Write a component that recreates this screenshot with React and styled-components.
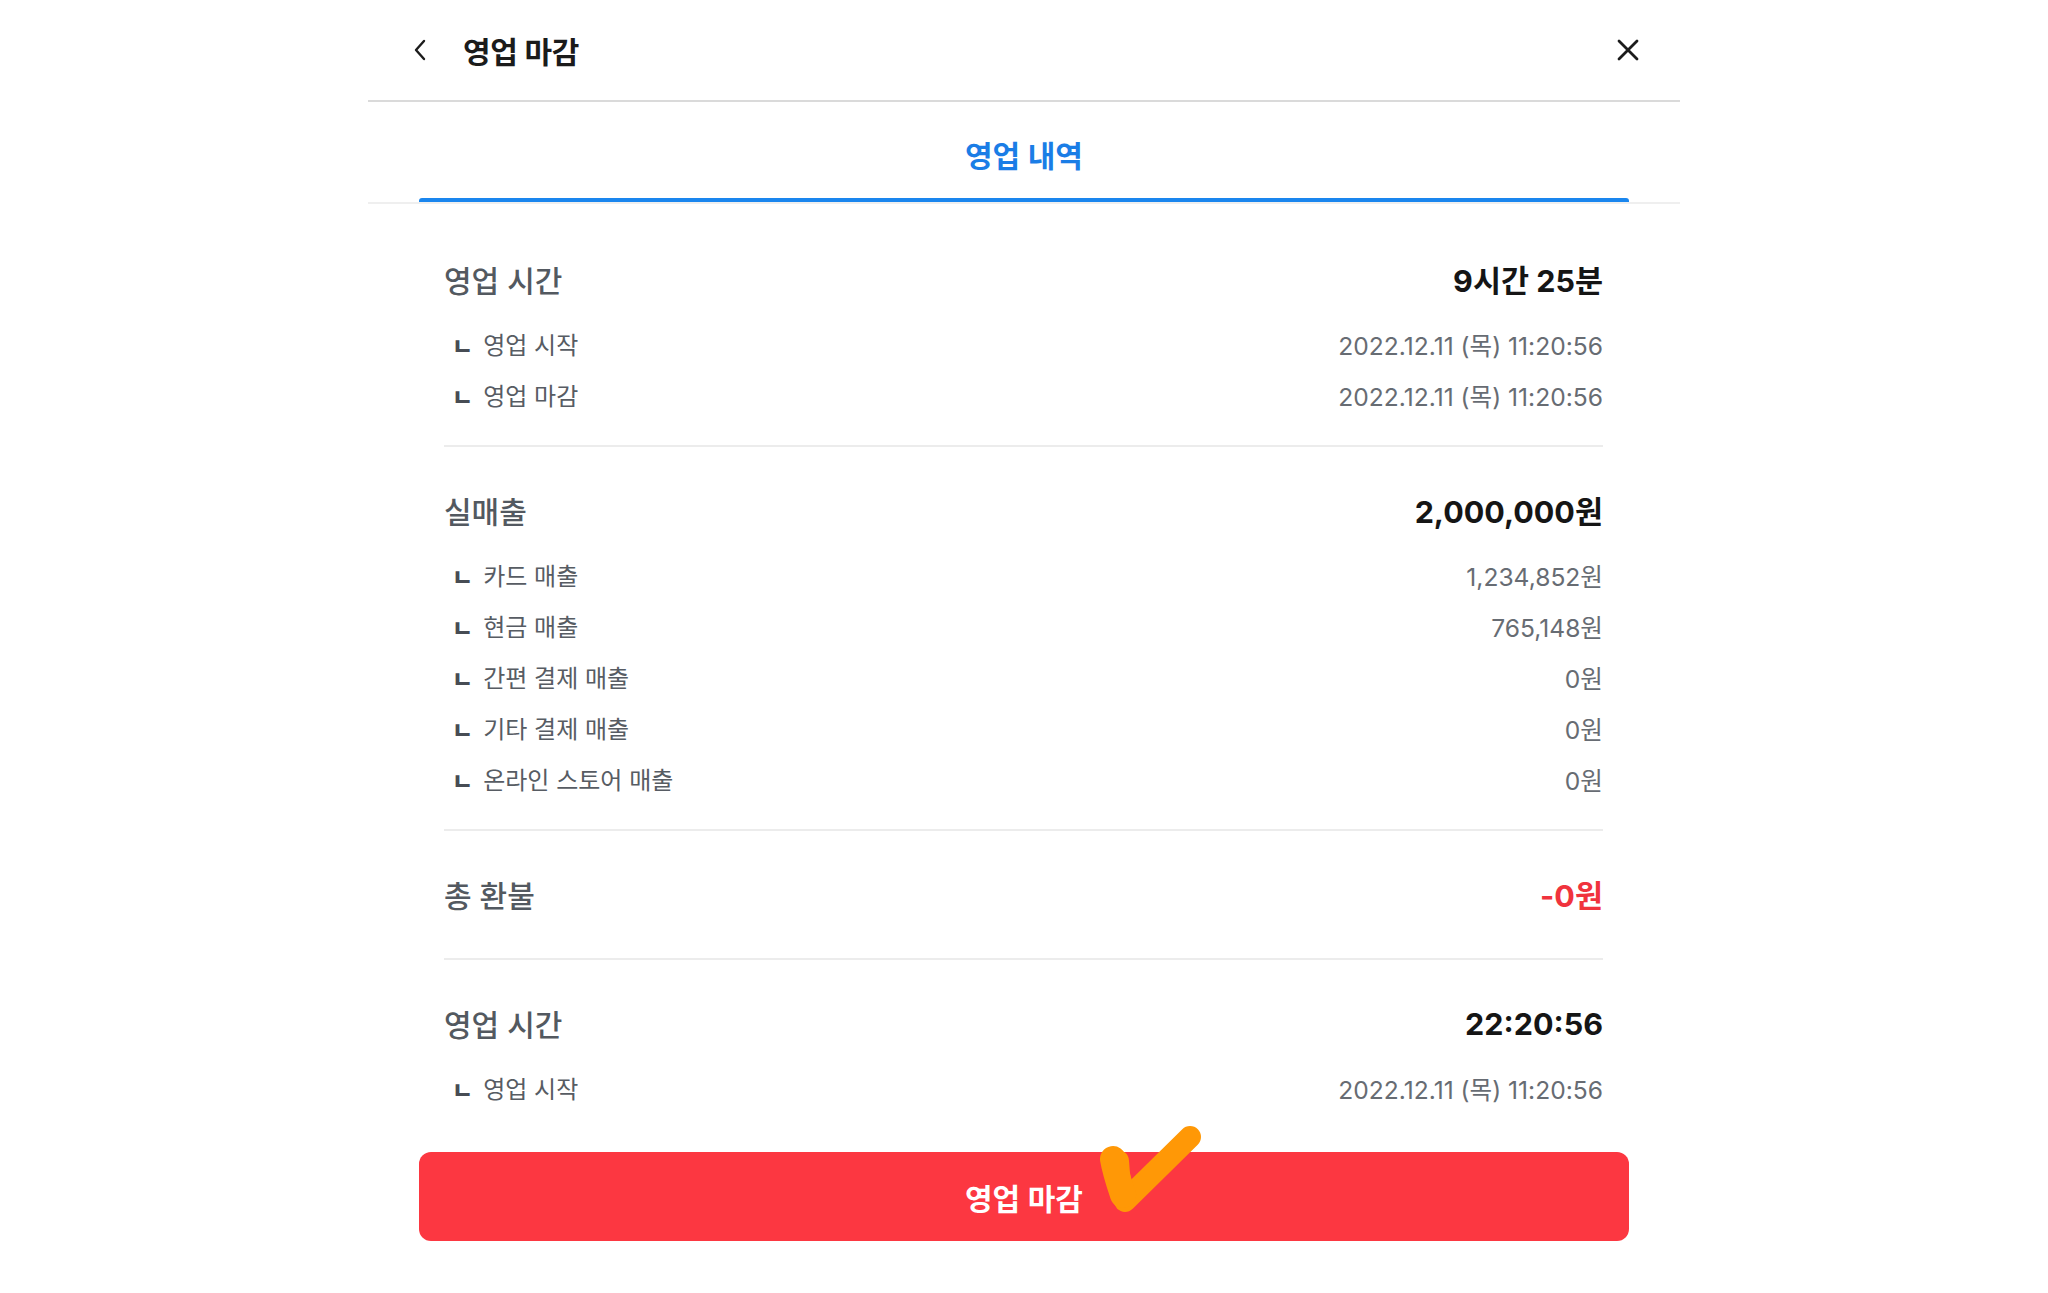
import React from 'react'
import styled, { createGlobalStyle } from 'styled-components'

const GlobalStyle = createGlobalStyle`
  html, body {
    margin: 0;
    padding: 0;
    background: #fff;
    font-family: "Inter", "Noto Sans CJK KR", sans-serif;
  }
`

const Page = styled.div`
  display: flex;
  justify-content: center;
  min-height: 1293px;
`
const Panel = styled.div`
  width: 1312px;
  display: flex;
  flex-direction: column;
`
const Header = styled.header`
  height: 100px;
  display: flex;
  align-items: center;
  padding: 0 40px 0 45px;
  border-bottom: 2px solid #dadada;
`
const IconButton = styled.button`
  border: none;
  background: none;
  padding: 0;
  display: flex;
  align-items: center;
  justify-content: center;
  color: #1c1c1c;
  cursor: pointer;
`
const Title = styled.h1`
  margin: 0 0 0 36px;
  font-size: 30px;
  font-weight: 700;
  color: #1b1b1b;
  flex: 1;
  letter-spacing: -0.3px;
`
const TabBar = styled.nav`
  padding: 0 51px;
  border-bottom: 2px solid #efefef;
`
const Tab = styled.div`
  height: 100px;
  display: flex;
  flex-direction: column;
  align-items: stretch;
  justify-content: flex-end;
`
const TabLabel = styled.span`
  flex: 1;
  display: flex;
  align-items: center;
  justify-content: center;
  padding-top: 8px;
  font-size: 30px;
  font-weight: 600;
  color: #1a7de6;
`
const Indicator = styled.div`
  height: 4px;
  border-radius: 3px 3px 0 0;
  background: #1a86ee;
`
const Content = styled.main`
  padding: 12px 77px 0 76px;
`
const Section = styled.section`
  padding: 38px 0 25px;
  border-bottom: ${p => (p.$last ? 'none' : '2px solid #ececec')};
`
const TitleRow = styled.div`
  height: 50px;
  display: flex;
  align-items: center;
  justify-content: space-between;
  margin-bottom: 14px;
`
const SectionLabel = styled.span`
  font-size: 30px;
  font-weight: 500;
  color: #535960;
`
const SectionValue = styled.span`
  font-size: 30.5px;
  font-weight: 700;
  color: ${p => (p.$red ? '#f0333d' : '#151515')};
`
const SubRow = styled.div`
  height: 51px;
  display: flex;
  align-items: center;
  justify-content: space-between;
`
const SubLabel = styled.span`
  display: flex;
  align-items: center;
  gap: 10px;
  padding-left: 8px;
  font-size: 24px;
  color: #575c63;
`
const Mark = styled.span`
  font-size: 23px;
  font-weight: 900;
  color: #474c54;
  padding-top: 3px;
`
const SubValue = styled.span`
  font-size: 24.6px;
  color: #676c73;
`
const Footer = styled.div`
  padding: 14px 51px 48px;
`
const CloseButton = styled.button`
  position: relative;
  width: 100%;
  height: 89px;
  border: none;
  border-radius: 12px;
  background: #fc3741;
  color: #fff;
  font-family: inherit;
  font-size: 30px;
  font-weight: 600;
  cursor: pointer;
`
const Check = styled.svg`
  position: absolute;
  left: 678px;
  top: -29px;
  width: 110px;
  height: 100px;
  pointer-events: none;
`

const sections = [
  {
    label: '영업 시간',
    value: '9시간 25분',
    rows: [
      ['영업 시작', '2022.12.11 (목) 11:20:56'],
      ['영업 마감', '2022.12.11 (목) 11:20:56'],
    ],
  },
  {
    label: '실매출',
    value: '2,000,000원',
    rows: [
      ['카드 매출', '1,234,852원'],
      ['현금 매출', '765,148원'],
      ['간편 결제 매출', '0원'],
      ['기타 결제 매출', '0원'],
      ['온라인 스토어 매출', '0원'],
    ],
  },
  { label: '총 환불', value: '-0원', red: true, rows: [] },
  {
    label: '영업 시간',
    value: '22:20:56',
    rows: [['영업 시작', '2022.12.11 (목) 11:20:56']],
  },
]

export default function App() {
  return (
    <>
      <GlobalStyle />
      <Page>
        <Panel>
          <Header>
            <IconButton aria-label="뒤로">
              <svg width="14" height="22" viewBox="0 0 14 22" fill="none">
                <path d="M11 2 L3 11 L11 20" stroke="#1c1c1c" strokeWidth="2.4" strokeLinecap="round" strokeLinejoin="round" />
              </svg>
            </IconButton>
            <Title>영업 마감</Title>
            <IconButton aria-label="닫기">
              <svg width="24" height="24" viewBox="0 0 24 24" fill="none">
                <path d="M3 3 L21 21 M21 3 L3 21" stroke="#1c1c1c" strokeWidth="2.8" strokeLinecap="round" />
              </svg>
            </IconButton>
          </Header>
          <TabBar>
            <Tab>
              <TabLabel>영업 내역</TabLabel>
              <Indicator />
            </Tab>
          </TabBar>
          <Content>
            {sections.map((s, i) => (
              <Section key={i} $last={i === sections.length - 1}>
                <TitleRow>
                  <SectionLabel>{s.label}</SectionLabel>
                  <SectionValue $red={s.red}>{s.value}</SectionValue>
                </TitleRow>
                {s.rows.map(([k, v], j) => (
                  <SubRow key={j}>
                    <SubLabel>
                      <Mark>ㄴ</Mark>
                      {k}
                    </SubLabel>
                    <SubValue>{v}</SubValue>
                  </SubRow>
                ))}
              </Section>
            ))}
          </Content>
          <Footer>
            <CloseButton>
              영업 마감
              <Check viewBox="0 0 110 100" fill="none">
                <path d="M21 38 C22 56 24 68 28 78 L93 14" stroke="#ff9806" strokeWidth="22" strokeLinecap="round" strokeLinejoin="round" />
                <path d="M16 36 C18 48 22 60 26 72" stroke="#ff9806" strokeWidth="26" strokeLinecap="round" />
              </Check>
            </CloseButton>
          </Footer>
        </Panel>
      </Page>
    </>
  )
}
